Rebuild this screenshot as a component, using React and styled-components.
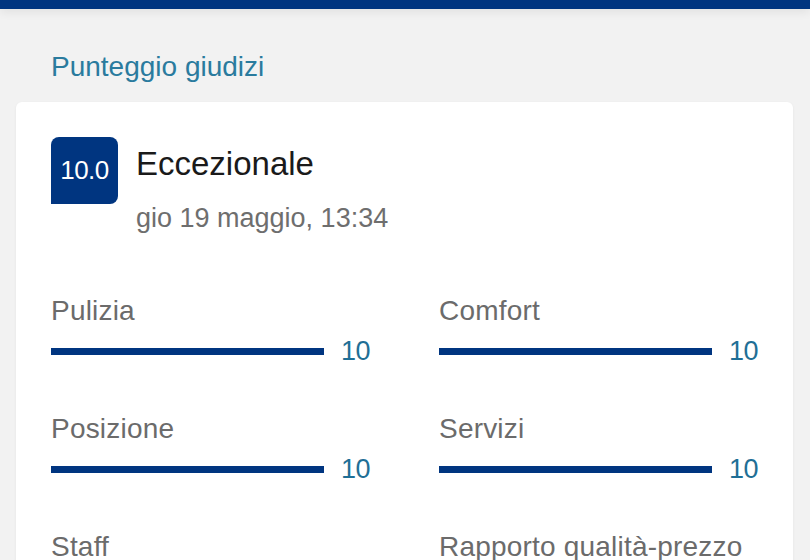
import React from 'react'
import styled, { createGlobalStyle } from 'styled-components'

const GlobalStyle = createGlobalStyle`
  html, body {
    margin: 0;
    padding: 0;
    background-color: #f2f2f2;
    font-family: "Liberation Sans", Arial, sans-serif;
  }
`

const Page = styled.div`
  min-height: 560px;
  background-color: #f2f2f2;
  overflow: hidden;
`

const TopBar = styled.div`
  height: 9px;
  background-color: #003580;
  box-shadow: 0 3px 10px rgba(0, 0, 0, 0.08);
`

const Content = styled.div`
  padding: 0 17px 0 16px;
`

const SectionTitle = styled.h2`
  margin: 42px 0 19px 35px;
  font-size: 28px;
  line-height: 32px;
  font-weight: 400;
  color: #2a7b9e;
`

const Card = styled.div`
  background-color: #fff;
  border-radius: 6px;
  box-shadow: 0 1px 3px rgba(0, 0, 0, 0.06);
  padding: 35px 35px 40px;
`

const Header = styled.div`
  display: flex;
  align-items: flex-start;
  gap: 18px;
`

const Badge = styled.div`
  width: 67px;
  height: 67px;
  flex-shrink: 0;
  display: flex;
  align-items: center;
  justify-content: center;
  background-color: #003580;
  color: #fff;
  font-size: 26px;
  letter-spacing: -0.5px;
  border-radius: 8px 8px 8px 0;
`

const HeaderText = styled.div`
  display: flex;
  flex-direction: column;
  gap: 17px;
  padding-top: 7px;
`

const Verdict = styled.div`
  font-size: 33px;
  line-height: 40px;
  color: #1a1a1a;
`

const DateText = styled.div`
  font-size: 27px;
  line-height: 34px;
  color: #6e6e6e;
`

const ScoreGrid = styled.div`
  display: grid;
  grid-template-columns: 1fr 1fr;
  column-gap: 69px;
  row-gap: 44px;
  margin-top: 59px;
`

const ScoreItem = styled.div`
  display: flex;
  flex-direction: column;
  gap: 6px;
`

const Label = styled.div`
  font-size: 28px;
  line-height: 34px;
  color: #6b6b6b;
  letter-spacing: 0.2px;
  white-space: nowrap;
`

const BarRow = styled.div`
  display: flex;
  align-items: center;
  gap: 17px;
`

const Track = styled.div`
  flex: 1;
  height: 7px;
  background-color: #e6e6e6;
`

const Fill = styled.div`
  height: 100%;
  background-color: #003580;
`

const Value = styled.div`
  width: 29px;
  font-size: 27px;
  line-height: 34px;
  color: #1f6f96;
  letter-spacing: -0.5px;
`

const scores = [
  { label: 'Pulizia', value: 10 },
  { label: 'Comfort', value: 10 },
  { label: 'Posizione', value: 10 },
  { label: 'Servizi', value: 10 },
  { label: 'Staff', value: 10 },
  { label: 'Rapporto qualità-prezzo', value: 10 },
]

export default function App() {
  return (
    <Page>
      <GlobalStyle />
      <TopBar />
      <Content>
        <SectionTitle>Punteggio giudizi</SectionTitle>
        <Card>
          <Header>
            <Badge>10.0</Badge>
            <HeaderText>
              <Verdict>Eccezionale</Verdict>
              <DateText>gio 19 maggio, 13:34</DateText>
            </HeaderText>
          </Header>
          <ScoreGrid>
            {scores.map((s) => (
              <ScoreItem key={s.label}>
                <Label>{s.label}</Label>
                <BarRow>
                  <Track>
                    <Fill style={{ width: `${s.value * 10}%` }} />
                  </Track>
                  <Value>{s.value}</Value>
                </BarRow>
              </ScoreItem>
            ))}
          </ScoreGrid>
        </Card>
      </Content>
    </Page>
  )
}
